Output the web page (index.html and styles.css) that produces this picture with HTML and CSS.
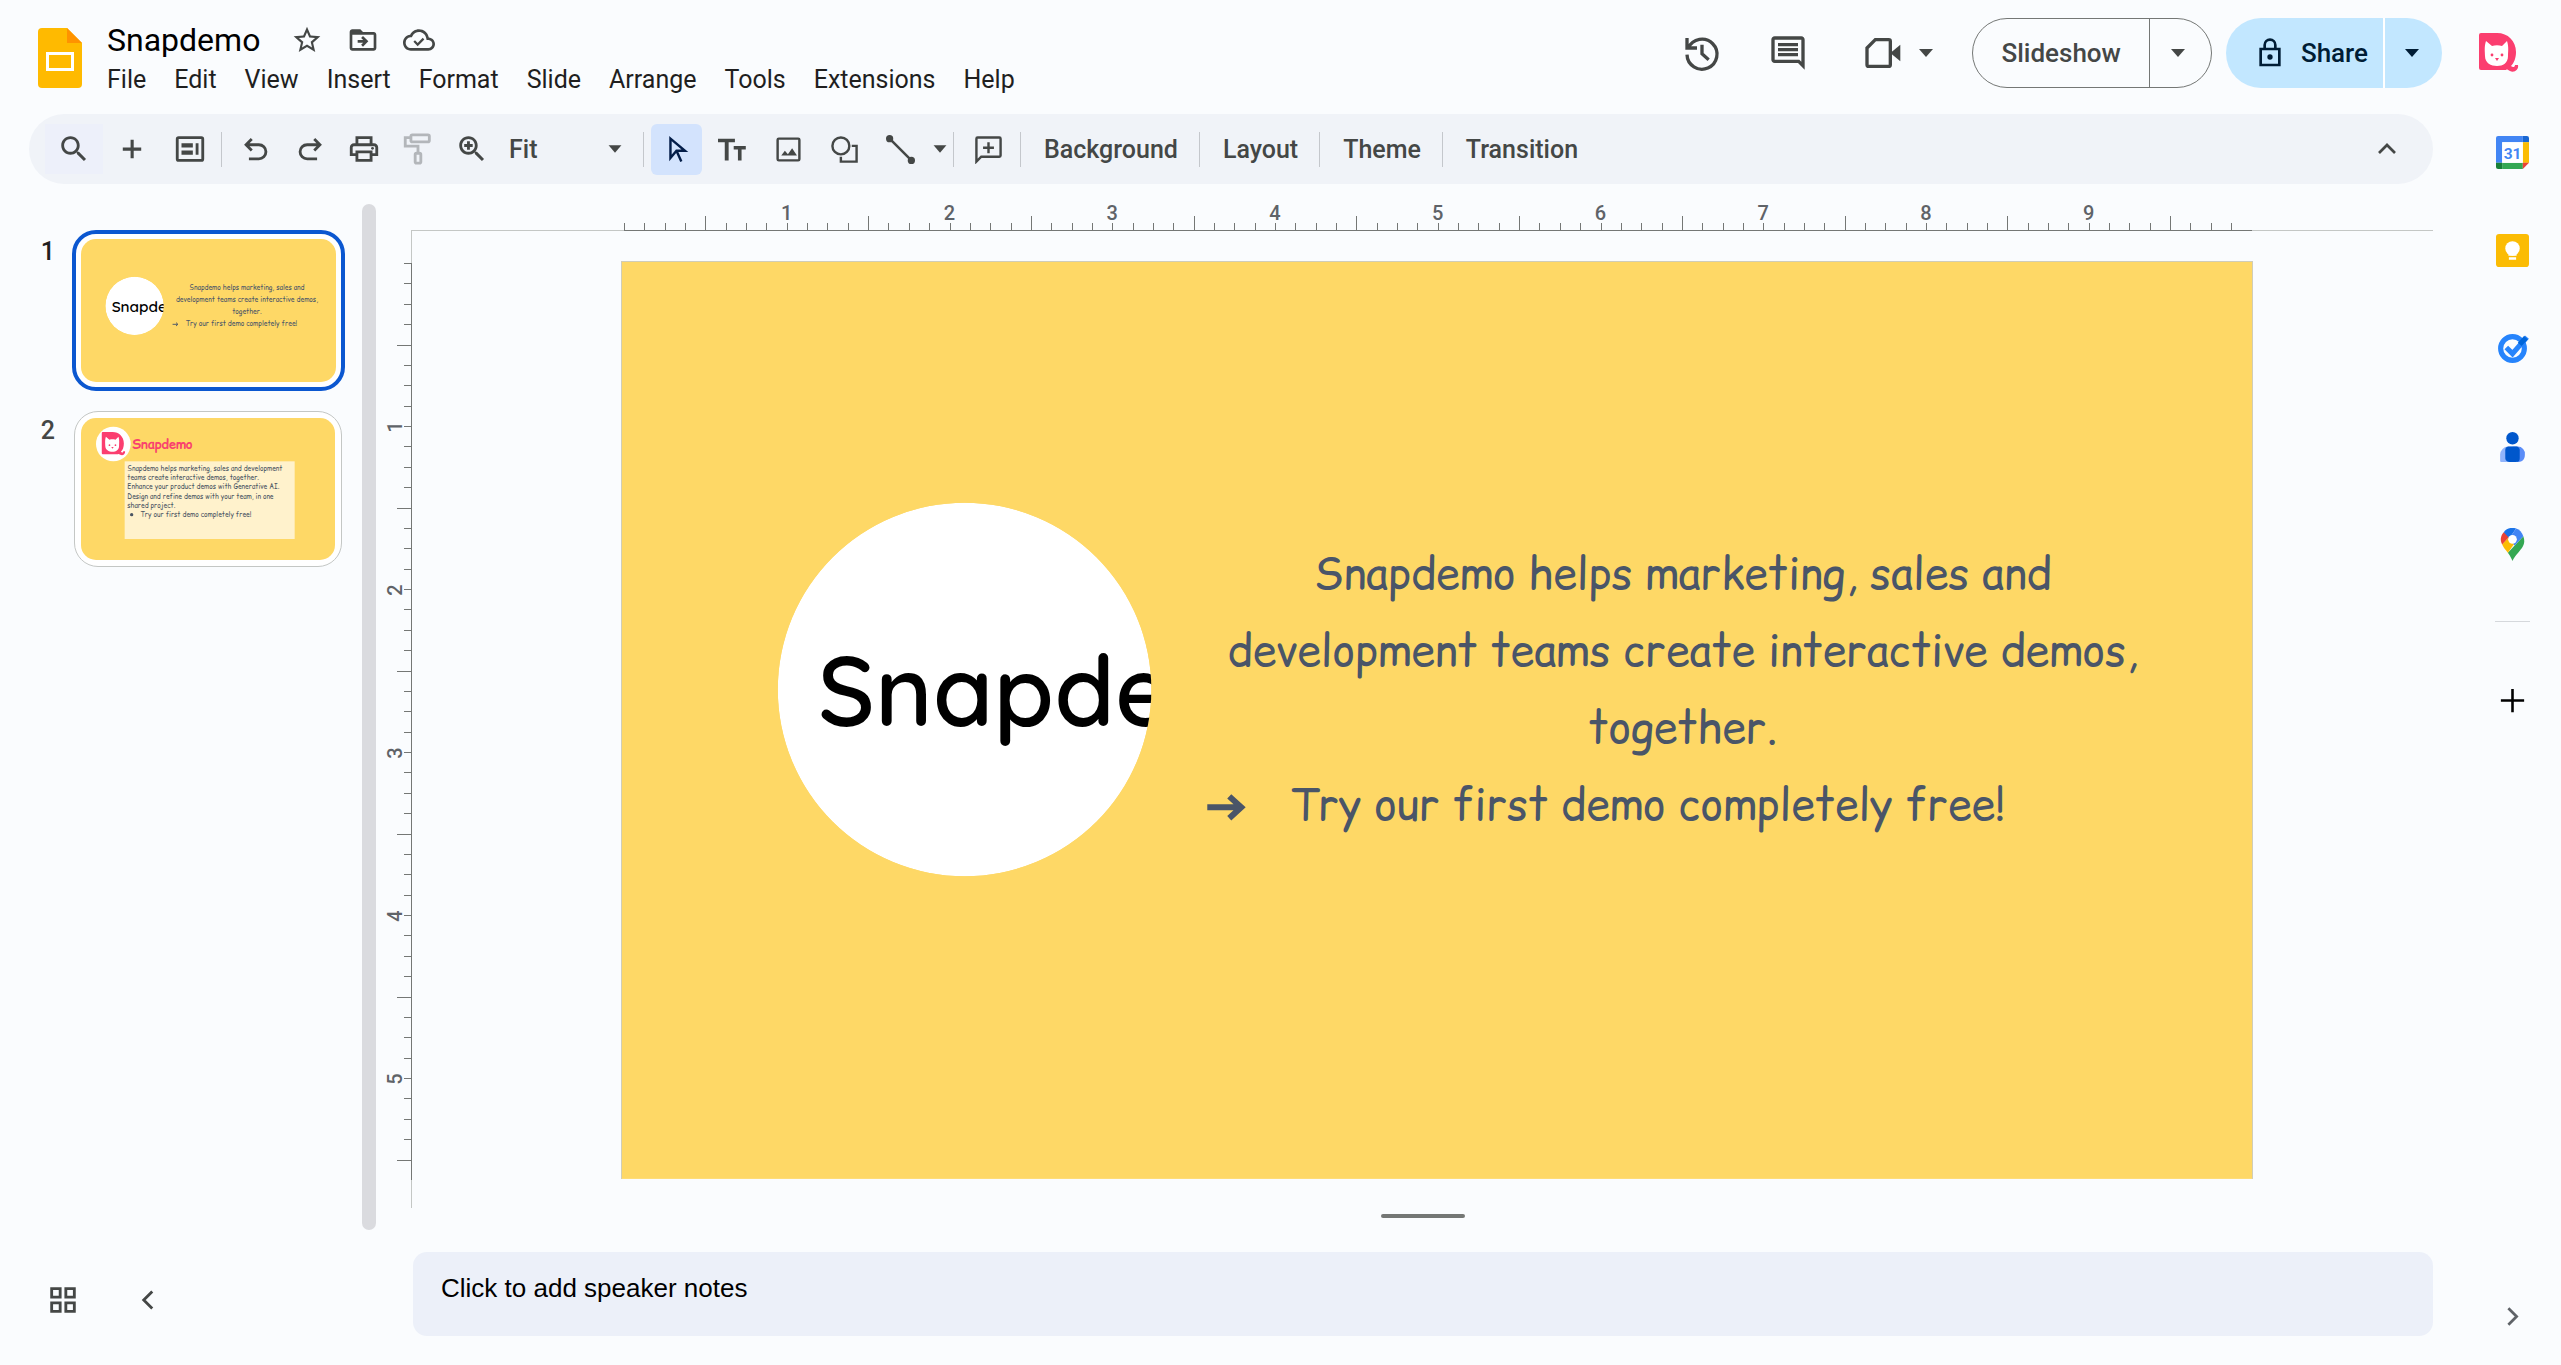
FILE: index.html
```html
<!DOCTYPE html>
<html lang="en">
<head>
    <meta charset="UTF-8">
    <meta name="viewport" content="width=device-width, initial-scale=1.0">
    <title>Snapdemo</title>
    <link rel="stylesheet" href="styles.css">
</head>
<body>
<!-- shared shapes -->
<svg class="defs" aria-hidden="true">
    <symbol id="cat" viewBox="0 0 40 40">
        <path fill="#fb3e6f" d="M2 0h16c11 0 19 8 19 19 0 6-2 11-5 14 2 2 4 1 4-1h3c1 5-4 8-8 6-2-1-3-2-4-1H2a2 2 0 0 1-2-2V2a2 2 0 0 1 2-2z"/>
        <path fill="#fff" d="M7 8l6 5c3-1 7-1 10 0l5-5c2 6 1 11 1 15 0 7-5 10-11 10S6 30 6 23c0-4-1-9 1-15z"/>
        <circle fill="#fb3e6f" cx="13" cy="22" r="1.4"/>
        <circle fill="#fb3e6f" cx="23" cy="22" r="1.4"/>
        <path fill="#fb3e6f" d="M16 25h4l-2 3z"/>
    </symbol>
    <symbol id="caret" viewBox="0 0 24 24"><path d="M5 8h14l-7 8z"/></symbol>
</svg>

<header class="topbar">
    <svg class="doc-logo" viewBox="0 0 44 60">
        <path fill="#ffba00" d="M4 0h25l15 15v41a4 4 0 0 1-4 4H4a4 4 0 0 1-4-4V4a4 4 0 0 1 4-4z"/>
        <path fill="#ff9300" d="M29 0l15 15H29z"/>
        <rect x="9.500" y="25.500" width="25" height="16" fill="none" stroke="#fff" stroke-width="3"/>
    </svg>
    <div class="doc">
        <div class="doc-title">
            <h1>Snapdemo</h1>
            <button class="mini" aria-label="Star"><svg viewBox="0 0 24 24"><path d="M22 9.240l-7.190-.620L12 2 9.190 8.630 2 9.240l5.460 4.730L5.820 21 12 17.270 18.180 21l-1.630-7.030L22 9.240zM12 15.400l-3.760 2.270 1-4.280-3.320-2.880 4.380-.380L12 6.100l1.710 4.040 4.380.380-3.320 2.880 1 4.280L12 15.400z"/></svg></button>
            <button class="mini" aria-label="Move"><svg viewBox="0 0 24 24"><path d="M20 6h-8l-2-2H4c-1.100 0-2 .9-2 2v12c0 1.100.9 2 2 2h16c1.100 0 2-.9 2-2V8c0-1.100-.9-2-2-2zm0 12H4V8h16v10z"/><path d="M12.160 12H8v2h4.160l-1.590 1.590L11.990 17 16 13.010 11.990 9l-1.410 1.410L12.160 12z"/></svg></button>
            <button class="mini" aria-label="Document status"><svg viewBox="0 0 24 24"><path d="M19.350 10.040C18.670 6.590 15.640 4 12 4 9.110 4 6.610 5.640 5.360 8.040 2.350 8.360 0 10.910 0 14c0 3.310 2.690 6 6 6h13c2.760 0 5-2.240 5-5 0-2.640-2.050-4.780-4.650-4.960zM19 18H6c-2.210 0-4-1.790-4-4 0-2.050 1.530-3.760 3.560-3.970l1.070-.110.5-.950C8.080 7.140 9.940 6 12 6c2.620 0 4.880 1.860 5.390 4.430l.3 1.500 1.530.110c1.560.1 2.780 1.410 2.780 2.960 0 1.650-1.350 3-3 3zm-8-3.800l-2-2L7.800 13.400 11 16.600l5-5-1.200-1.200z"/></svg></button>
        </div>
        <nav class="menu">
            <a href="#">File</a>
            <a href="#">Edit</a>
            <a href="#">View</a>
            <a href="#">Insert</a>
            <a href="#">Format</a>
            <a href="#">Slide</a>
            <a href="#">Arrange</a>
            <a href="#">Tools</a>
            <a href="#">Extensions</a>
            <a href="#">Help</a>
        </nav>
    </div>
    <div class="actions">
        <button class="action" aria-label="History"><svg class="line" viewBox="0 0 24 24"><path d="M3 3v6h6M3.800 9A9 9 0 1 1 3 13M12 7v5.500l4 3.500"/></svg></button>
        <button class="action" aria-label="Comments"><svg viewBox="0 0 24 24"><path d="M22 4c0-1.100-.9-2-2-2H4c-1.100 0-2 .9-2 2v12c0 1.100.9 2 2 2h14l4 4V4zM20 4v13.200L18.800 16H4V4h16zM6 12h12v2H6zm0-3h12v2H6zm0-3h12v2H6z"/></svg></button>
        <button class="action meet" aria-label="Join a call"><svg class="line" viewBox="0 0 24 24"><path d="M8 4h8a1 1 0 0 1 1 1v14a1 1 0 0 1-1 1H4a1 1 0 0 1-1-1V9z"/><path class="solid" d="M17 12l6-5v10z"/></svg><svg class="caret"><use href="#caret"/></svg></button>
        <div class="pill slideshow">
            <button>Slideshow</button>
            <button class="more" aria-label="Slideshow options"><svg class="caret"><use href="#caret"/></svg></button>
        </div>
        <div class="pill share">
            <button><svg class="lock" viewBox="0 0 24 24"><path d="M5 9h14v12H5zM8 9V6a4 4 0 0 1 8 0v3"/><circle cx="12" cy="15" r="1"/></svg>Share</button>
            <button class="more" aria-label="Share options"><svg class="caret"><use href="#caret"/></svg></button>
        </div>
        <svg class="avatar"><use href="#cat"/></svg>
    </div>
</header>

<div class="layout">
    <div class="main">
        <div class="toolbar">
            <div class="group wide">
                <button class="search" aria-label="Search the menus"><svg viewBox="0 0 24 24"><path d="M15.500 14h-.8l-.3-.3C15.400 12.600 16 11.100 16 9.500 16 5.900 13.100 3 9.500 3S3 5.900 3 9.500 5.900 16 9.500 16c1.600 0 3.100-.6 4.200-1.600l.3.3v.8l5 5L20.500 19l-5-5zm-6 0C7 14 5 12 5 9.500S7 5 9.500 5 14 7 14 9.500 12 14 9.500 14z"/></svg></button>
                <button aria-label="New slide"><svg viewBox="0 0 24 24"><path d="M11 5.500h2.200V11h5.300v2.200h-5.300v5.300H11v-5.300H5.500V11H11z"/></svg></button>
                <button aria-label="Templates"><svg class="line" viewBox="0 0 24 24"><rect x="3" y="4" width="18" height="16" rx="1"/><path class="solid" d="M6 8h8v3H6zM6 13h8v3H6zM16 8h2v8h-2z"/></svg></button>
            </div>
            <span class="sep"></span>
            <div class="group">
                <button aria-label="Undo"><svg class="line" viewBox="0 0 24 24"><path d="M9 5L5 9l4 4M5 9h9a5 5 0 0 1 0 10H7"/></svg></button>
                <button aria-label="Redo"><svg class="line" viewBox="0 0 24 24"><path d="M15 5l4 4-4 4M19 9h-9a5 5 0 0 0 0 10h7"/></svg></button>
                <button aria-label="Print"><svg viewBox="0 0 24 24"><path d="M19 8h-1V3H6v5H5c-1.700 0-3 1.300-3 3v6h4v4h12v-4h4v-6c0-1.700-1.300-3-3-3zM8 5h8v3H8V5zm8 12v2H8v-4h8v2zm2-2v-2H6v2H4v-4c0-.6.4-1 1-1h14c.6 0 1 .4 1 1v4h-2z"/><circle cx="18" cy="11.500" r="1"/></svg></button>
                <button class="off" aria-label="Paint format"><svg class="line" viewBox="0 0 24 24"><rect x="7" y="2" width="13" height="5" rx="1"/><path d="M7 4H3v6h9v5"/><rect x="10" y="15" width="4" height="7" rx="1"/></svg></button>
                <button aria-label="Zoom"><svg viewBox="0 0 24 24"><path d="M15.500 14h-.8l-.3-.3C15.400 12.600 16 11.100 16 9.500 16 5.900 13.100 3 9.500 3S3 5.900 3 9.500 5.900 16 9.500 16c1.600 0 3.100-.6 4.200-1.600l.3.3v.8l5 5L20.500 19l-5-5zm-6 0C7 14 5 12 5 9.500S7 5 9.500 5 14 7 14 9.500 12 14 9.500 14z"/><path d="M8.500 6.500h2v2h2v2h-2v2h-2v-2h-2v-2h2z"/></svg></button>
            </div>
            <label class="zoom"><select aria-label="Zoom level"><option>Fit</option><option>50%</option><option>100%</option><option>200%</option></select><svg class="caret"><use href="#caret"/></svg></label>
            <span class="sep"></span>
            <div class="group tools">
                <button class="active" aria-label="Select"><svg class="line" viewBox="0 0 24 24"><path d="M7 3l12 10h-7l-5 6zM12 13l4 9" stroke-linejoin="miter"/></svg></button>
                <button aria-label="Text box"><svg viewBox="0 0 24 24"><path d="M0 3h14v3H8.800v15H5.600V6H0zM13 9h10v3h-3.500v9h-3v-9H13z"/></svg></button>
                <button aria-label="Insert image"><svg class="line" viewBox="0 0 24 24"><rect x="3" y="3" width="18" height="18" rx="1"/><path class="solid" d="M6 17l3-4 2.500 3 3.500-5 4 6z"/></svg></button>
                <button aria-label="Shape"><svg class="line" viewBox="0 0 24 24"><circle cx="9" cy="9" r="7"/><path d="M18 9h4v13H9v-4"/></svg></button>
                <button aria-label="Line"><svg class="line" viewBox="0 0 24 24"><path d="M3 3l18 18"/><circle class="solid" cx="3" cy="3" r="3"/><circle class="solid" cx="21" cy="21" r="3"/></svg></button>
            </div>
            <button class="line-menu" aria-label="Line options"><svg class="caret"><use href="#caret"/></svg></button>
            <span class="sep"></span>
            <button class="comment" aria-label="Add comment"><svg class="line" viewBox="0 0 24 24"><path d="M2 22V3a1 1 0 0 1 1-1h18a1 1 0 0 1 1 1v14a1 1 0 0 1-1 1H6zM12 6v9M7.500 10.500h9"/></svg></button>
            <span class="sep"></span>
            <button class="text">Background</button>
            <span class="sep"></span>
            <button class="text">Layout</button>
            <span class="sep"></span>
            <button class="text">Theme</button>
            <span class="sep"></span>
            <button class="text">Transition</button>
            <button class="collapse" aria-label="Hide the menus"><svg class="line" viewBox="0 0 24 24"><path d="M6 15l6-6 6 6"/></svg></button>
        </div>

        <div class="editor">
            <div class="filmstrip">
                <div class="strip">
                    <ol class="thumbs">
                        <li class="selected">
                            <span class="num">1</span>
                            <div class="thumb">
                                <svg viewBox="0 0 1632 918">
                                    <rect class="page" width="1632" height="918"/>
                                    <g clip-path="url(#round)">
                                        <circle cx="343" cy="428" r="187" fill="#fff"/>
                                        <text class="brand" x="196" y="465">Snapde</text>
                                    </g>
                                    <g class="copy">
                                        <text x="1062" y="327">Snapdemo helps marketing, sales and</text>
                                        <text x="1062" y="404">development teams create interactive demos,</text>
                                        <text x="1062" y="482">together.</text>
                                        <text class="start" x="668" y="559">Try our first demo completely free!</text>
                                        <path d="M586 546h33M608 535l12 11-12 11"/>
                                    </g>
                                </svg>
                            </div>
                        </li>
                        <li>
                            <span class="num">2</span>
                            <div class="thumb">
                                <svg viewBox="0 0 762 426">
                                    <rect class="page" width="762" height="426"/>
                                    <circle cx="97" cy="78" r="52" fill="#fff"/>
                                    <use href="#cat" x="61" y="42" width="74" height="72"/>
                                    <text class="heading" x="154" y="92">Snapdemo</text>
                                    <rect x="131" y="130" width="510" height="233" fill="#fff2cc"/>
                                    <g class="notes-copy">
                                        <text x="139" y="158">Snapdemo helps marketing, sales and development</text>
                                        <text x="139" y="185">teams create interactive demos, together.</text>
                                        <text x="139" y="212">Enhance your product demos with Generative AI.</text>
                                        <text x="139" y="242">Design and refine demos with your team, in one</text>
                                        <text x="139" y="269">shared project.</text>
                                        <circle cx="152" cy="290" r="5"/>
                                        <text x="178" y="296">Try our first demo completely free!</text>
                                    </g>
                                </svg>
                            </div>
                        </li>
                    </ol>
                    <div class="scrollbar"></div>
                </div>
                <div class="strip-footer">
                    <button aria-label="Grid view"><svg class="line" viewBox="0 0 24 24"><path d="M4 4h6v6H4zM14 4h6v6h-6zM4 14h6v6H4zM14 14h6v6h-6z"/></svg></button>
                    <button aria-label="Hide filmstrip"><svg class="line" viewBox="0 0 24 24"><path d="M15 6l-6 6 6 6"/></svg></button>
                </div>
            </div>

            <div class="workspace">
                <div class="ruler-x"><div class="ticks" data-count="80"></div></div>
                <div class="stage">
                    <div class="ruler-y"><div class="ticks" data-count="45"></div></div>
                    <div class="canvas">
                        <svg class="slide" viewBox="0 0 1632 918">
                            <clipPath id="round"><circle cx="343" cy="428" r="187"/></clipPath>
                            <rect class="page" width="1632" height="918"/>
                            <g clip-path="url(#round)">
                                <circle cx="343" cy="428" r="187" fill="#fff"/>
                                <text class="brand" x="196" y="465">Snapde</text>
                            </g>
                            <g class="copy">
                                <text x="1062" y="327">Snapdemo helps marketing, sales and</text>
                                <text x="1062" y="404">development teams create interactive demos,</text>
                                <text x="1062" y="482">together.</text>
                                <text class="start" x="668" y="559">Try our first demo completely free!</text>
                                <path d="M586 546h33M608 535l12 11-12 11"/>
                            </g>
                        </svg>
                    </div>
                </div>
                <div class="handle"></div>
                <textarea class="notes" rows="1" aria-label="Speaker notes">Click to add speaker notes</textarea>
            </div>
        </div>
    </div>

    <aside class="sidepanel">
        <button aria-label="Calendar"><svg viewBox="0 0 32 32">
            <path fill="#4285f4" d="M2 0h24v6H6v20H0V2a2 2 0 0 1 2-2z"/>
            <path fill="#1967d2" d="M26 0h4a2 2 0 0 1 2 2v4h-6z"/>
            <path fill="#fbbc04" d="M26 6h6v20h-6z"/>
            <path fill="#34a853" d="M6 26h20v6H6z"/>
            <path fill="#188038" d="M0 26h6v6H2a2 2 0 0 1-2-2z"/>
            <path fill="#ea4335" d="M26 26h6l-6 6z"/>
            <path fill="#fff" d="M6 6h20v20H6z"/>
            <text class="cal-day" x="16" y="22">31</text>
        </svg></button>
        <button aria-label="Keep"><svg viewBox="0 0 32 32">
            <rect width="32" height="32" rx="3" fill="#fbbc04"/>
            <circle cx="16" cy="14" r="7" fill="#fff"/>
            <path fill="#fff" d="M12 18h8v3h-8zM12.500 22.500h7V25h-7z"/>
        </svg></button>
        <button aria-label="Tasks"><svg viewBox="0 0 32 32">
            <circle cx="16" cy="16" r="11.500" fill="none" stroke="#2684fc" stroke-width="5"/>
            <path d="M10 15l6 6L30 5" fill="none" stroke="#2684fc" stroke-width="5"/>
            <path d="M23 12l6-6.500" fill="none" stroke="#0066da" stroke-width="5"/>
        </svg></button>
        <button aria-label="Contacts"><svg viewBox="0 0 32 32">
            <circle cx="16" cy="8" r="6" fill="#0057cc"/>
            <path fill="#91b4fb" d="M12 16h4v15H5a1 1 0 0 1-1-1v-6a8 8 0 0 1 8-8z"/>
            <path fill="#5b8df8" d="M16 16h5a7 7 0 0 1 7 8c0 5-3 7-6 7h-6z"/>
            <path fill="#0057cc" d="M13 16h6c3 0 4 2 4 4v7c0 3-1 4-4 4h-6c-3 0-4-2-4-4v-7c0-3 1-4 4-4z"/>
        </svg></button>
        <button aria-label="Maps"><svg viewBox="0 0 32 32">
            <path fill="#34a853" d="M26.500 8c3 8-2 12-5 16-3 3-4 5-5.500 8-1.500-3-2-5-4.500-8z"/>
            <path fill="#fbbc04" d="M11.500 24C9 21 7.500 19 6 16l7-8h10z"/>
            <path fill="#ea4335" d="M7.500 4C4 8 4 12 6 16l8-9z"/>
            <path fill="#1a73e8" d="M7.500 4c3-4 8-5 12-3.500L13 10z"/>
            <path fill="#4285f4" d="M19.500.5C23 1.500 25 4 26.500 8L18 17l-5-7z"/>
            <circle cx="16" cy="11" r="4.200" fill="#fff"/>
        </svg></button>
        <hr>
        <button class="addon" aria-label="Get add-ons"><svg class="line" viewBox="0 0 24 24"><path d="M12 3v18M3 12h18"/></svg></button>
        <button class="hide" aria-label="Hide side panel"><svg class="line" viewBox="0 0 24 24"><path d="M9 6l6 6-6 6"/></svg></button>
    </aside>
</div>

<script src="script.js"></script>
</body>
</html>
```
FILE: styles.css
```css
* {
    box-sizing: border-box;
}
body {
    margin: 0;
    min-height: 100vh;
    display: flex;
    flex-direction: column;
    background: #fafcfe;
    color: #1f1f1f;
    font-family: Roboto, sans-serif;
    font-size: 25px;
}
button {
    display: flex;
    align-items: center;
    justify-content: center;
    flex: none;
    padding: 0;
    border: none;
    background: none;
    color: #444746;
    font-family: inherit;
    font-size: 26px;
    cursor: pointer;
}
svg {
    display: block;
    fill: currentColor;
}
.defs {
    position: absolute;
    width: 0;
    height: 0;
}
.line {
    fill: none;
    stroke: currentColor;
    stroke-width: 2;
}
.solid {
    fill: currentColor;
    stroke: none;
}
.caret {
    width: 22px;
    height: 22px;
}

/* top bar */
.topbar {
    display: flex;
    height: 114px;
    padding: 18px 42px 0 38px;
}
.doc-logo {
    width: 44px;
    height: 60px;
    margin: 10px 25px 0 0;
}
.doc-title {
    display: flex;
    align-items: center;
    height: 44px;
    gap: 24px;
}
.doc-title h1 {
    margin: 0 7px 0 0;
    color: #000;
    font-size: 32px;
    font-weight: 400;
}
.mini svg {
    width: 32px;
    height: 32px;
}
.menu {
    display: flex;
    gap: 28px;
    line-height: 36px;
}
.menu a {
    color: #1f1f1f;
    text-decoration: none;
}
.actions {
    display: flex;
    align-items: center;
    height: 70px;
    margin-left: auto;
}
.action {
    width: 86px;
}
.action svg {
    width: 40px;
    height: 40px;
}
.action.meet {
    width: 138px;
    margin-right: 3px;
    gap: 12px;
}
.action .caret,
.more .caret {
    width: 24px;
    height: 24px;
}
.pill {
    display: flex;
    height: 70px;
    border-radius: 35px;
}
.pill button {
    padding: 0 28px;
    color: inherit;
    font-weight: 500;
}
.pill .more {
    width: 62px;
    padding: 0 4px 0 0;
}
.slideshow {
    border: 1px solid #747775;
    color: #444746;
    margin-right: 14px;
}
.slideshow .more {
    border-left: 1px solid #747775;
}
.share {
    background: #c2e7ff;
    color: #001d35;
    margin-right: 37px;
}
.share button {
    padding: 0 15px 0 28px;
    gap: 15px;
}
.share .more {
    width: 59px;
    border-left: 2px solid #fff;
}
.lock {
    width: 32px;
    height: 32px;
    fill: none;
    stroke: currentColor;
    stroke-width: 2;
}
.avatar {
    width: 40px;
    height: 40px;
}

/* toolbar */
.layout {
    display: flex;
    flex: 1;
}
.main {
    display: flex;
    flex-direction: column;
    flex: 1;
    min-width: 0;
    padding-right: 30px;
}
.toolbar {
    display: flex;
    align-items: center;
    height: 70px;
    margin-left: 29px;
    padding: 0 16px;
    border-radius: 35px;
    background: #f0f3f8;
}
.toolbar svg {
    width: 34px;
    height: 34px;
}
.toolbar .caret {
    width: 22px;
    height: 22px;
}
.group {
    display: flex;
}
.group button {
    width: 54px;
    height: 50px;
}
.group.wide {
    margin-right: 2px;
}
.group.wide button {
    width: 58px;
}
.group .search {
    background: #edf0fa;
}
.group.tools {
    gap: 5px;
}
.group.tools button {
    width: 51px;
    height: 51px;
}
.group.tools svg {
    width: 29px;
    height: 29px;
}
.group .off {
    color: #b3b6ba;
}
.group .active {
    border-radius: 6px;
    background: #d3e3fd;
    color: #041e49;
}
.sep {
    flex: none;
    width: 1px;
    height: 35px;
    margin: 0 7px 0 0;
    background: #c4c7cc;
}
.zoom {
    display: flex;
    align-items: center;
    width: 144px;
    padding: 0 17px 0 10px;
    color: #444746;
}
.zoom select {
    flex: 1;
    padding: 0;
    border: none;
    background: none;
    appearance: none;
    color: inherit;
    font-family: inherit;
    font-size: 25px;
    font-weight: 500;
}
.line-menu {
    width: 27px;
}
.comment {
    width: 54px;
    margin-right: 5px;
}
.toolbar .comment svg {
    width: 29px;
    height: 29px;
}
.toolbar .text {
    padding: 0 21px 0 16px;
    font-size: 25px;
    font-weight: 500;
}
.collapse {
    width: 60px;
    margin-left: auto;
}
.toolbar .collapse svg {
    width: 32px;
    height: 32px;
}

/* filmstrip */
.editor {
    display: flex;
    flex: 1;
}
.filmstrip {
    display: flex;
    flex-direction: column;
    flex: none;
    width: 376px;
}
.strip {
    display: flex;
    justify-content: space-between;
    flex: 1;
    padding-top: 20px;
}
.thumbs {
    margin: 0;
    padding: 26px 0 0;
    list-style: none;
}
.thumbs li {
    display: flex;
    margin-bottom: 20px;
}
.num {
    width: 55px;
    margin-right: 19px;
    padding-top: 6px;
    color: #444746;
    font-size: 25px;
    font-weight: 500;
    line-height: 28px;
    text-align: right;
}
.thumb {
    width: 268px;
    padding: 6px;
    border: 1px solid #c4c7c5;
    border-radius: 24px;
    background: #fff;
}
.thumb svg {
    width: 100%;
    border-radius: 15px;
}
.selected .num {
    margin-right: 17px;
    padding-top: 8px;
    color: #1f1f1f;
}
.selected .thumb {
    width: 273px;
    padding: 5px;
    border: 4px solid #0b57d0;
}
.scrollbar {
    width: 14px;
    border-radius: 7px;
    background: #dadbdf;
}
.strip-footer {
    display: flex;
    align-items: center;
    height: 135px;
    padding: 4px 0 0 36px;
    gap: 31px;
}
.strip-footer button {
    width: 54px;
    height: 54px;
}
.strip-footer svg {
    width: 34px;
    height: 34px;
}

/* slides */
.page {
    fill: #fed866;
}
.brand {
    fill: #000;
    font-family: Quicksand, "Open Sans", sans-serif;
    font-size: 98px;
    font-weight: 600;
}
.copy {
    fill: #4a5568;
    font-family: "Comic Sans MS", "Comic Relief", "Comic Neue", "Open Sans", sans-serif;
    font-size: 43px;
    text-anchor: middle;
}
.copy .start {
    text-anchor: start;
}
.copy path {
    fill: none;
    stroke: #4a5568;
    stroke-width: 6;
}
.heading {
    fill: #f9416f;
    font-family: "Comic Sans MS", "Comic Relief", "Comic Neue", "Open Sans", sans-serif;
    font-size: 38px;
    font-weight: 700;
}
.notes-copy {
    fill: #4b5563;
    font-family: "Comic Sans MS", "Comic Relief", "Comic Neue", "Open Sans", sans-serif;
    font-size: 20px;
}

/* workspace */
.workspace {
    display: flex;
    flex-direction: column;
    flex: 1;
    min-width: 0;
}
.ruler-x {
    display: flex;
    align-items: flex-end;
    height: 47px;
    margin-left: 35px;
    padding: 0 181px 0 213px;
    border-bottom: 1px solid #c4c7c5;
}
.ticks {
    display: flex;
    flex: 1;
    color: #5f6368;
    font-size: 20px;
    font-weight: 500;
    line-height: 20px;
}
.ticks i {
    position: relative;
    flex: 1;
    font-style: normal;
}
.ticks span {
    position: absolute;
    width: 20px;
    text-align: center;
}
.ruler-x .ticks {
    align-items: flex-end;
    margin-bottom: -1px;
    border-bottom: 1px solid #747775;
}
.ruler-x i {
    height: 7px;
    border-left: 1px solid #747775;
}
.ruler-x .half {
    height: 14px;
}
.ruler-x span {
    left: -11px;
    bottom: 7px;
}
.stage {
    display: flex;
}
.ruler-y {
    display: flex;
    flex: none;
    justify-content: flex-end;
    width: 36px;
    padding: 32px 0 28px;
    border-right: 1px solid #c4c7c5;
}
.ruler-y .ticks {
    flex-direction: column;
    align-items: flex-end;
    margin-right: -1px;
    border-right: 1px solid #747775;
}
.ruler-y i {
    width: 7px;
    border-top: 1px solid #747775;
}
.ruler-y .half {
    width: 14px;
}
.ruler-y span {
    right: 6px;
    top: -10px;
    transform: rotate(-90deg);
}
.canvas {
    flex: 1;
    padding: 30px 180px 29px 209px;
}
.slide {
    width: 100%;
    border: 1px solid #d0cdb8;
    border-bottom: none;
}
.handle {
    align-self: center;
    width: 84px;
    height: 4px;
    margin: 6px 0 34px 36px;
    border-radius: 2px;
    background: #747775;
}
.notes {
    display: block;
    height: 84px;
    margin: 0 0 0 37px;
    padding: 20px 28px;
    border: none;
    border-radius: 14px;
    background: #ecf0f9;
    color: #000;
    font-family: "Liberation Sans", Arial, sans-serif;
    font-size: 26px;
    line-height: 32px;
    resize: none;
}

/* side panel */
.sidepanel {
    display: flex;
    flex-direction: column;
    align-items: center;
    width: 98px;
    padding-top: 5px;
}
.sidepanel button {
    width: 66px;
    height: 66px;
    margin-bottom: 32px;
}
.sidepanel svg {
    width: 33px;
    height: 33px;
}
.sidepanel hr {
    width: 35px;
    margin: 12px 0 45px;
    border: none;
    border-top: 1px solid #d5d8dc;
}
.cal-day {
    fill: #4285f4;
    font-size: 15px;
    font-weight: 700;
    text-anchor: middle;
}
.sidepanel .addon {
    color: #000;
}
.sidepanel .addon svg {
    width: 31px;
    height: 31px;
}
.sidepanel .hide {
    margin: auto 0 16px;
    color: #5f6368;
}
```
FILE: script.js
```js
// eighth-inch marks, one label per inch
document.querySelectorAll('.ticks').forEach(function(ruler) {
    const count = Number(ruler.dataset.count);
    for (let n = 0; n < count; n++) {
        const tick = document.createElement('i');
        if (n % 8 === 4) {
            tick.className = 'half';
        }
        if (n > 0 && n % 8 === 0) {
            const label = document.createElement('span');
            label.textContent = n / 8;
            tick.appendChild(label);
        }
        ruler.appendChild(tick);
    }
});
```
